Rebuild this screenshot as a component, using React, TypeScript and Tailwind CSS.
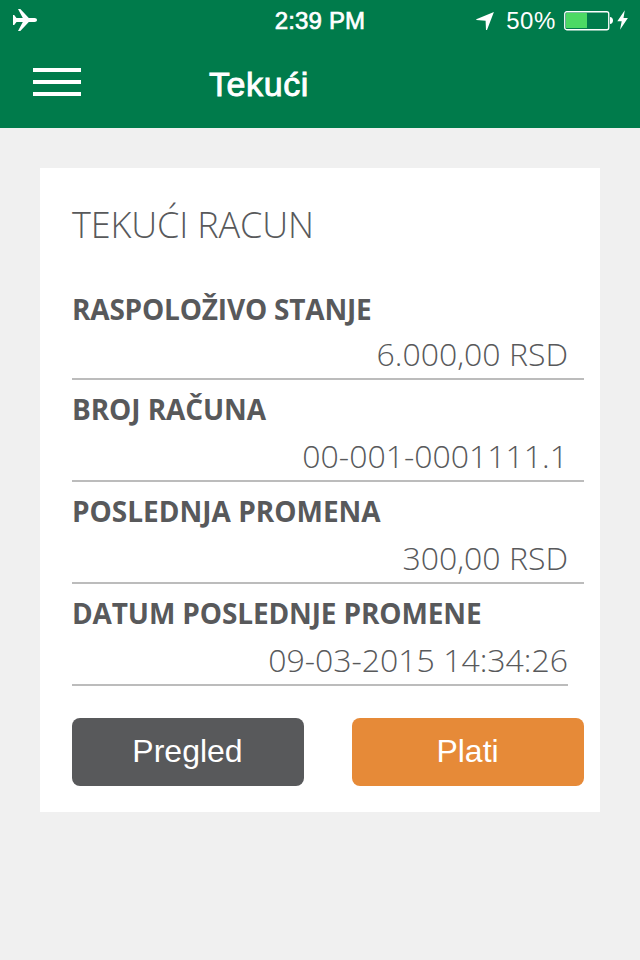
import clsx from 'clsx'

const rows = [
  { label: 'RASPOLOŽIVO STANJE', value: '6.000,00 RSD', tracking: 'tracking-[-0.2px]' },
  { label: 'BROJ RAČUNA', value: '00-001-0001111.1', tracking: 'tracking-[-0.1px]' },
  { label: 'POSLEDNJA PROMENA', value: '300,00 RSD', tracking: 'tracking-normal' },
  { label: 'DATUM POSLEDNJE PROMENE', value: '09-03-2015 14:34:26', tracking: 'tracking-[-0.13px]' },
]

function StatusBar() {
  return (
    <div className="grid h-10 grid-cols-3 items-center">
      <svg className="ml-3" width="26" height="24" viewBox="0 0 26 24" fill="white" aria-hidden="true">
        <path d="M1 7h1.200l2.300 3h6.300L6 1h2.300l8.500 9h5.700c1.500 0 2.500.8 2.500 2s-1 2-2.500 2h-5.700l-8.500 9H6l4.800-9H4.500l-2.300 3H1z" />
      </svg>
      <span className="pt-0.5 text-center text-[24px] leading-[38px] tracking-[0.15px] [-webkit-text-stroke:0.7px_white]">2:39 PM</span>
      <div className="flex items-center justify-end pr-3">
        <svg className="mr-3 mt-0.5" width="18" height="18" viewBox="0 0 18 18" fill="white" aria-hidden="true">
          <path d="M17.900.1 11 17.900H10L9.600 8.700.3 8.100V7.200z" />
        </svg>
        <span className="mr-2 pt-0.5 text-[24px] leading-[38px] tracking-[0.6px]">50%</span>
        <svg className="mr-[3px] mt-0.5" width="50" height="20" viewBox="0 0 50 20" aria-hidden="true">
          <rect x=".75" y=".75" width="44" height="18" rx="2" fill="none" stroke="white" strokeWidth="1.300" />
          <rect x="2" y="2" width="21" height="15" rx=".5" fill="#4cd964" />
          <path d="M46 6c1.700 0 3 1.500 3 3.500S47.700 13 46 13z" fill="white" />
        </svg>
        <svg width="11" height="20" viewBox="0 0 11 20" fill="white" aria-hidden="true">
          <path d="M7.800.3.300 11.200H4.700L3 19.700 10.900 8H6.500z" />
        </svg>
      </div>
    </div>
  )
}

export default function App() {
  return (
    <div className="min-h-[960px] bg-[#f0f0f0] font-['Liberation_Sans',sans-serif]">
      <header className="h-32 bg-[#007b4b] text-white">
        <StatusBar />
        <div className="flex h-[88px] items-center pl-[33px]">
          <button className="flex w-12 flex-col gap-2 pb-1" aria-label="Menu">
            <span className="h-1 bg-white" />
            <span className="h-1 bg-white" />
            <span className="h-1 bg-white" />
          </button>
          <h1 className="ml-32 text-[34px] leading-10 tracking-[0.6px] [-webkit-text-stroke:0.9px_white]">Tekući</h1>
        </div>
      </header>

      <main className="p-10">
        <section className="h-[644px] bg-white pl-8 pr-4 pt-[37px] font-['Open_Sans',sans-serif] text-[#58595b]">
          <h2 className="text-[36px] font-light leading-10 tracking-[-0.15px]">TEKUĆI RACUN</h2>
          <dl className="mt-[35px]">
            {rows.map((row, i) => (
              <div
                key={row.label}
                className={clsx(
                  'border-b-2 border-[#bcbcbc] pt-[9px]',
                  i === 0 ? 'h-[100px]' : 'h-[102px]',
                  i === rows.length - 1 && 'mr-4',
                )}
              >
                <dt className={clsx('text-[28px] font-bold leading-10', row.tracking)}>{row.label}</dt>
                <dd
                  className={clsx(
                    'text-right text-[32px] font-light leading-10',
                    i === 0 ? 'mt-[5px]' : 'mt-[7px]',
                    i < rows.length - 1 && 'pr-4',
                  )}
                >
                  {row.value}
                </dd>
              </div>
            ))}
          </dl>
          <div className="mt-8 flex justify-between font-['Liberation_Sans',sans-serif] text-[32px] text-white">
            <button className="h-[68px] w-[232px] rounded-lg bg-[#58595b] pb-0.5 pr-px">Pregled</button>
            <button className="h-[68px] w-[232px] rounded-lg bg-[#e68a38] pb-0.5 pr-px">Plati</button>
          </div>
        </section>
      </main>
    </div>
  )
}
